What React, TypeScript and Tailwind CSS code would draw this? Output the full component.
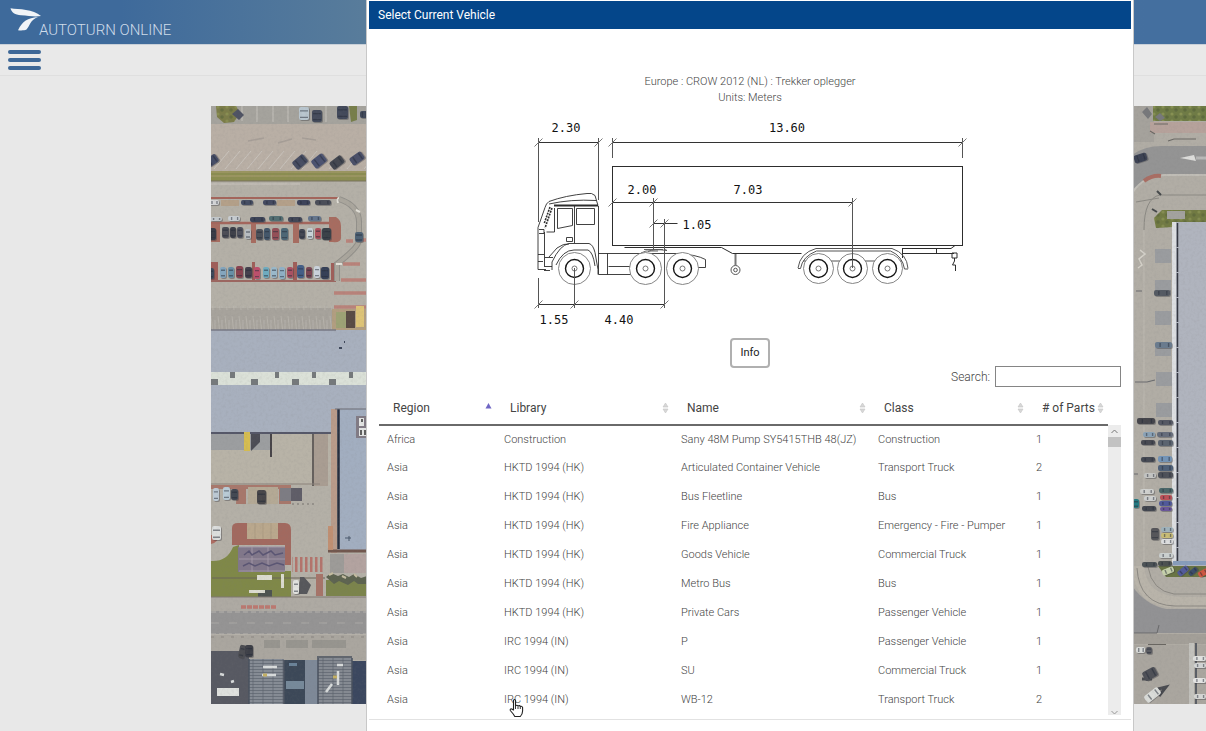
import React, { useState } from "react";

type Vehicle = {
  region: string;
  library: string;
  name: string;
  vehicleClass: string;
  parts: number;
};

const vehicles: Vehicle[] = [
  { region: "Africa", library: "Construction", name: "Sany 48M Pump SY5415THB 48(JZ)", vehicleClass: "Construction", parts: 1 },
  { region: "Asia", library: "HKTD 1994 (HK)", name: "Articulated Container Vehicle", vehicleClass: "Transport Truck", parts: 2 },
  { region: "Asia", library: "HKTD 1994 (HK)", name: "Bus Fleetline", vehicleClass: "Bus", parts: 1 },
  { region: "Asia", library: "HKTD 1994 (HK)", name: "Fire Appliance", vehicleClass: "Emergency - Fire - Pumper", parts: 1 },
  { region: "Asia", library: "HKTD 1994 (HK)", name: "Goods Vehicle", vehicleClass: "Commercial Truck", parts: 1 },
  { region: "Asia", library: "HKTD 1994 (HK)", name: "Metro Bus", vehicleClass: "Bus", parts: 1 },
  { region: "Asia", library: "HKTD 1994 (HK)", name: "Private Cars", vehicleClass: "Passenger Vehicle", parts: 1 },
  { region: "Asia", library: "IRC 1994 (IN)", name: "P", vehicleClass: "Passenger Vehicle", parts: 1 },
  { region: "Asia", library: "IRC 1994 (IN)", name: "SU", vehicleClass: "Commercial Truck", parts: 1 },
  { region: "Asia", library: "IRC 1994 (IN)", name: "WB-12", vehicleClass: "Transport Truck", parts: 2 },
];

const columns: { label: string; width: string; sort: "asc" | "none" }[] = [
  { label: "Region", width: "w-[117px]", sort: "asc" },
  { label: "Library", width: "w-[177px]", sort: "none" },
  { label: "Name", width: "w-[197px]", sort: "none" },
  { label: "Class", width: "w-[158px]", sort: "none" },
  { label: "# of Parts", width: "w-[80px]", sort: "none" },
];

function SortIcon({ sort }: { sort: "asc" | "none" }) {
  if (sort === "asc") {
    return (
      <svg width="7" height="12" viewBox="0 0 7 12" aria-hidden="true">
        <path d="M3.5 1 6.500 6.500H.5Z" fill="#6f66c4" />
      </svg>
    );
  }
  return (
    <svg width="7" height="12" viewBox="0 0 7 12" aria-hidden="true">
      <path d="M3.5 1 6 5H1ZM3.5 11 1 7H6Z" fill="#d8d8d8" stroke="#c4c4c4" strokeWidth=".6" />
    </svg>
  );
}

/* A parked car seen from above: x, y, width, height, colour, rotation. */
type Car = [number, number, number, number, string, number?];

function Cars({ cars }: { cars: Car[] }) {
  return (
    <>
      {cars.map(([x, y, w, h, fill, angle = 0], i) => {
        const upright = h > w;
        return (
          <g key={i} transform={`rotate(${angle} ${x + w / 2} ${y + h / 2})`}>
            <rect x={x + 1} y={y + 1} width={w} height={h} rx="2" fill="#3d3d42" opacity=".4" />
            <rect x={x} y={y} width={w} height={h} rx="2" fill={fill} />
            {upright ? (
              <path d={`M${x + 1} ${y + h * 0.3}h${w - 2}M${x + 1} ${y + h * 0.8}h${w - 2}`} stroke="#252b38" strokeWidth="1.4" opacity=".5" />
            ) : (
              <path d={`M${x + w * 0.3} ${y + 1}v${h - 2}M${x + w * 0.8} ${y + 1}v${h - 2}`} stroke="#252b38" strokeWidth="1.4" opacity=".5" />
            )}
          </g>
        );
      })}
    </>
  );
}

const westCars: Car[] = [
  [299, 107, 10, 13, "#b9c6cf"],
  [312, 110, 10, 12, "#454c5c"],
  [337, 106, 11, 13, "#42495a"],
  [360, 111, 8, 7, "#424a5c"],
  [293, 157, 14, 10, "#464c61", -40],
  [312, 156, 14, 10, "#4b5270", -38],
  [330, 158, 14, 9, "#43464f", -38],
  [350, 154, 14, 9, "#4a4f68", -35],
  [206, 156, 12, 9, "#454c66", -35],
  [209, 200, 10, 5, "#d5d6d8"],
  [241, 200, 12, 5, "#454d63"],
  [263, 200, 13, 5, "#434960"],
  [297, 200, 13, 5, "#3d435a"],
  [315, 200, 16, 5, "#4a4d58"],
  [210, 217, 12, 4, "#c3c8cb"],
  [228, 216, 12, 5, "#c9ced2"],
  [250, 217, 15, 5, "#3b4256"],
  [269, 216, 14, 5, "#526e72"],
  [288, 217, 14, 5, "#424757"],
  [308, 216, 13, 5, "#64758d"],
  [206, 228, 10, 12, "#393c47"],
  [222, 227, 7, 11, "#4b4c55"],
  [230, 227, 6, 11, "#3e4049"],
  [237, 227, 6, 11, "#4c4f5b"],
  [245, 229, 6, 10, "#b8bdc2"],
  [256, 229, 7, 11, "#4c5059"],
  [264, 228, 6, 12, "#43566a"],
  [272, 228, 7, 12, "#944f57"],
  [281, 228, 7, 12, "#4c6675"],
  [299, 229, 6, 10, "#414551"],
  [307, 228, 6, 11, "#c9d3d8"],
  [315, 228, 6, 11, "#ad515c"],
  [322, 228, 9, 12, "#3a4148"],
  [206, 268, 8, 11, "#3c485a"],
  [220, 267, 6, 11, "#84a6be"],
  [228, 267, 6, 11, "#6790a7"],
  [236, 266, 7, 12, "#894350"],
  [245, 267, 7, 11, "#433f4c"],
  [254, 267, 6, 12, "#bd4f6c"],
  [263, 267, 6, 11, "#6eacc0"],
  [271, 267, 6, 11, "#9ab9ca"],
  [279, 267, 6, 12, "#8fb0c6"],
  [287, 267, 6, 11, "#aa5163"],
  [297, 265, 7, 13, "#435e87"],
  [306, 267, 6, 11, "#7a4553"],
  [314, 266, 6, 12, "#cbd3dc"],
  [321, 267, 8, 12, "#353f56"],
  [355, 232, 8, 10, "#4d6174"],
  [213, 488, 6, 13, "#bdcad4"],
  [223, 487, 7, 13, "#b9cbd6"],
  [231, 489, 7, 11, "#444953"],
  [257, 490, 9, 14, "#484649"],
  [212, 526, 9, 14, "#dcdedd"],
  [239, 645, 6, 13, "#4c4d52", 12],
  [245, 645, 8, 12, "#3d3f47"],
  [293, 580, 6, 14, "#e2e3df"],
];

const eastCars: Car[] = [
  [1134, 154, 13, 8, "#3c4253", -18],
  [1154, 290, 16, 6, "#545a63"],
  [1155, 342, 17, 6, "#6a7b8e"],
  [1137, 418, 18, 6, "#45454b"],
  [1158, 420, 15, 5, "#555863"],
  [1143, 432, 12, 5, "#8aa2b6"],
  [1157, 432, 16, 5, "#666d7b"],
  [1141, 440, 14, 5, "#474951"],
  [1158, 440, 15, 6, "#5b6470"],
  [1141, 457, 14, 5, "#444852"],
  [1158, 456, 14, 6, "#7394b7"],
  [1158, 465, 15, 6, "#4e6078"],
  [1144, 473, 12, 5, "#c5c6c4"],
  [1158, 472, 15, 6, "#4d5058"],
  [1140, 489, 14, 5, "#d0d1cf"],
  [1159, 488, 14, 5, "#4a6668"],
  [1144, 496, 12, 5, "#ced0d0"],
  [1160, 495, 12, 5, "#bd5057"],
  [1133, 499, 6, 9, "#247a82"],
  [1159, 501, 13, 5, "#50599a"],
  [1142, 506, 14, 5, "#42464f"],
  [1160, 507, 12, 4, "#6a569b"],
  [1151, 528, 8, 12, "#56565a"],
  [1161, 527, 12, 5, "#a0b3bc"],
  [1161, 533, 12, 5, "#c9bd77"],
  [1161, 539, 12, 5, "#dedfe0"],
  [1159, 553, 14, 5, "#cbd0cf"],
  [1142, 562, 15, 5, "#4b5155"],
  [1158, 561, 14, 5, "#4c5150"],
  [1162, 568, 12, 6, "#c7d2ac", -22],
  [1177, 568, 12, 6, "#525b9a", -40],
  [1188, 569, 10, 5, "#394b69", -40],
  [1198, 570, 10, 6, "#d15540", -30],
  [1136, 647, 9, 6, "#d9dbd8"],
  [1146, 647, 6, 7, "#5a5b61"],
  [1143, 669, 14, 10, "#4e5057", -28],
  [1144, 691, 17, 8, "#dadcd9", -38],
  [1193, 656, 13, 5, "#e0e1df"],
  [1194, 663, 12, 5, "#d5d7d7"],
  [1193, 678, 13, 5, "#e5e5e4"],
  [1194, 694, 12, 5, "#d7d8d6"],
];

function AerialMap() {
  return (
    <svg className="h-[598px] w-full" viewBox="211 106 995 598" preserveAspectRatio="xMinYMin slice" role="img" aria-label="Aerial photo of the site">
      <defs>
        <pattern id="tiles" width="10" height="3" patternUnits="userSpaceOnUse">
          <path d="M0 .5H10M3 0V3" stroke="#565d68" strokeWidth=".6" />
        </pattern>
        <pattern id="leaves" width="9" height="7" patternUnits="userSpaceOnUse">
          <circle cx="2" cy="2" r="1.6" fill="#97a05c" />
          <circle cx="6" cy="5" r="1.8" fill="#525f38" />
        </pattern>
        <pattern id="stalls" width="7" height="24" patternUnits="userSpaceOnUse">
          <path d="M1 4 3 22M5 8V20" stroke="#bab7b0" strokeWidth=".7" />
        </pattern>
        <pattern id="zebra" width="5" height="8" patternUnits="userSpaceOnUse">
          <rect width="2.5" height="8" fill="#b4746c" />
        </pattern>
        <filter id="grain" x="0" y="0" width="100%" height="100%">
          <feTurbulence type="fractalNoise" baseFrequency=".35" numOctaves="3" seed="4" />
          <feColorMatrix values="0 0 0 0 .2  0 0 0 0 .2  0 0 0 0 .2  1.2 0 0 0 -.5" />
        </filter>
      </defs>
      <rect x="211" y="106" width="995" height="598" fill="#b4b0a7" />

      {/* North-west car park */}
      <rect x="211" y="106" width="156" height="18" fill="#a5a39d" />
      <path d="M242 106V121M257 106V122M273 106V122M288 106V122M326 106V122" stroke="#c4c1bb" />
      <path d="M216 106h20l4 7-6 9-10 1-7-6Z" fill="#7b7c48" />
      <path d="M216 106h20l4 7-6 9-10 1-7-6Z" fill="url(#leaves)" opacity=".5" />
      <path d="m232 114 6-5 6 6-5 5Z" fill="#4e5263" />
      <path d="M349 106h8v14l-6 2Z" fill="#777e4a" />
      <rect x="211" y="124" width="156" height="48" fill="#b9afa5" />
      <path d="m214 169 15-18m-4 18 15-18m-4 18 15-18m-4 18 15-18m-4 18 15-18m-4 18 15-18m-4 18 15-18m-4 18 15-18m-4 18 15-18m12 18 5-6m13 6 5-6m12 6 5-6m12 6 5-6" stroke="#cdc8c2" strokeWidth=".8" />
      <path d="M248 141l16-3M278 143l14-4M302 138l14 2" stroke="#a69e97" strokeWidth="1.5" />
      <rect x="211" y="171" width="156" height="10" fill="#8b8d51" />
      <path d="M211 172H367M211 176H367" stroke="#a09865" strokeWidth="1.5" />
      <path d="M211 181H367" stroke="#77705c" />
      <path d="M211 184H300" stroke="#c9c4bd" />

      {/* Middle rows with paved islands */}
      <path d="M211 198H338" stroke="#a4655b" strokeWidth="2" />
      <rect x="221" y="200" width="18" height="6" fill="#b4a089" />
      <rect x="277" y="200" width="18" height="6" fill="#b4a089" />
      <path d="M211 223H330" stroke="#a4665c" strokeWidth="2.5" />
      <path d="M211 224h9v18h-9ZM251 224h5v19h-5ZM293 224h6v19h-6ZM329 217h7q5 3 5 9v12q0 5-9 4h-3Z" fill="#a76c60" />
      <path d="M211 262h7v19h-7ZM252 262h3v19h-3ZM293 262h4v19h-4ZM331 263h5v19h-5Z" fill="#9f5e59" />
      <path d="M211 281H336" stroke="#9c6660" strokeWidth="2" />
      <path d="M339 199q21 7 20 25v16q0 7-22 24v17" fill="none" stroke="#92908a" strokeWidth="6" />
      <path d="M339 199q21 7 20 25v16q0 7-22 24v17" fill="none" stroke="#aaa69d" strokeWidth="4" />
      <path d="M339 198q-2 0-1 5M356 210l4 2M336 264h6" stroke="#e1dfd7" strokeWidth="2" />
      <path d="M343 264H360M341 280H367M334 293H367M334 307H367M346 241H353M359 240H367" stroke="#b9827a" strokeWidth="3.500" />
      <rect x="211" y="308" width="122" height="22" fill="#a7a39c" />
      <rect x="211" y="306" width="122" height="24" fill="url(#stalls)" />
      <rect x="332" y="309" width="35" height="21" fill="#b29e80" />
      <rect x="336" y="312" width="10" height="16" fill="#9da275" />
      <rect x="346" y="311" width="9" height="17" fill="#594b44" />
      <rect x="356" y="306" width="8" height="21" fill="#dec477" />

      {/* Warehouse roof */}
      <rect x="211" y="330" width="156" height="103" fill="#a8b0be" />
      <path d="M211 330H336" stroke="#777984" strokeWidth="1.500" />
      <rect x="211" y="372" width="156" height="13" fill="#dbe1d8" />
      <path d="M230 372h5v6h-5ZM275 372h4v6h-4ZM312 372h4v6h-4ZM349 372h4v6h-4ZM211 379h7v6h-7ZM251 379h7v6h-7ZM292 379h7v6h-7ZM329 379h7v6h-7Z" fill="#75797b" />
      <path d="M339 348h3M344 342h1" stroke="#3d4659" strokeWidth="2" />

      {/* Yard behind the warehouse */}
      <rect x="211" y="433" width="122" height="52" fill="#b8b3a7" />
      <rect x="211" y="434" width="60" height="16" fill="#9c9ea0" />
      <path d="M211 433H333" stroke="#555768" strokeWidth="2" />
      <path d="M251 434h9v8l-9 9Z" fill="#4b4c55" />
      <rect x="244" y="432" width="6" height="19" fill="#d6bd50" />
      <path d="M271 434V457" stroke="#474448" strokeWidth="2" />
      <rect x="313" y="434" width="15" height="52" fill="#a99d92" />
      <path d="M313 434V486" stroke="#65605d" strokeWidth="2" />
      <path d="M211 484H320" stroke="#8a817b" />
      <path d="M211 485h80v4h-80Z" fill="#a9786c" />
      <path d="M237 488h9v16h-10ZM279 488h12v16h-12Z" fill="#a7776b" />
      <rect x="248" y="487" width="30" height="17" fill="#b4a995" />
      <rect x="280" y="488" width="11" height="13" fill="#7d7c83" />
      <rect x="291" y="488" width="11" height="13" fill="#5f5d67" />
      <path d="M292 504h22" stroke="#77736f" strokeDasharray="2 3" />
      <rect x="331" y="409" width="6" height="144" fill="#b99b8a" />
      <rect x="338" y="409" width="29" height="141" fill="#a2aec0" />
      <path d="M338.500 409V549" stroke="#262c3c" strokeWidth="2.500" />
      <path d="M335 409H367" stroke="#6d6c75" />
      <rect x="356" y="416" width="10" height="22" fill="#817b85" />
      <path d="M359 418h5v8h-5ZM359 428h7v8h-7Z" fill="#e3e5e4" />
      <path d="M362 419v3M361 430v5M365 430v5" stroke="#333" strokeWidth="1.500" />
      <path d="M328 551H367" stroke="#71574e" strokeWidth="3" />
      <rect x="328" y="526" width="5" height="24" fill="#c08f72" />
      <path d="M345 538h6M349 536v5" stroke="#48566b" />
      <rect x="330" y="554" width="14" height="19" fill="#9d9b98" />
      <rect x="344" y="554" width="22" height="19" fill="#b3a3a0" />

      {/* Plaza and lawn */}
      <path d="M211 561q16 1 22-14l6-2v26h52v26H211Z" fill="#7f8848" />
      <path d="M211 535h8q-1 8-8 9Z" fill="#ad6c62" />
      <path d="M232 528q0-5 6-5h47q6 0 6 7v35h-6v-20h-53Z" fill="#a2695f" />
      <rect x="247" y="523" width="31" height="16" fill="#baa88d" />
      <path d="M255 523v16M263 523v16M271 523v16" stroke="#ab9a81" />
      <rect x="238" y="547" width="47" height="25" fill="#81778a" />
      <path d="M239 547h46M239 559h46M239 571h46M252 547v25M268 547v25" stroke="#a297a6" />
      <path d="m244 555 5-4 3 4 7-4 4 4 8-4 4 4 8-2M243 566l6-3 6 3 7-3 7 3 8-3 7 2" stroke="#5a5573" strokeWidth="1.500" fill="none" />
      <rect x="292" y="557" width="31" height="15" fill="url(#zebra)" />
      <path d="M212 578H325" stroke="#6a6559" />
      <path d="M257 575h15v5h-15ZM281 574h3v14h-3ZM249 590h16v3h-16Z" fill="#dcdcd0" />
      <path d="M265 590h7v7h-14v-4h7Z" fill="#4d5350" />
      <path d="M300 577h4l7 8-4 9h-8Z" fill="#56575b" />
      <rect x="316" y="574" width="7" height="22" fill="#a67469" />
      <rect x="326" y="580" width="41" height="16" fill="#7b844b" />
      <path d="m326 577 5-4 7 3 5-2 6 3 5-3 7 4 6-2v8h-9l-4-3-6 4-9-4-5 3Z" fill="#5d6350" />
      <path d="m329 575 4-2M342 576l4 2M354 574l3 3" stroke="#c5bda2" strokeWidth="2" />

      {/* Southern road */}
      <rect x="211" y="597" width="156" height="15" fill="#aeaaa3" />
      <path d="M211 597H367" stroke="#807972" />
      <path d="M241 607H277" stroke="#bb7870" strokeWidth="3.500" strokeDasharray="5 1" />
      <rect x="211" y="611" width="156" height="23" fill="#959494" />
      <path d="M211 612H367M211 634H367" stroke="#b5b2ad" strokeDasharray="5 3" />
      <path d="M211 623H367" stroke="#aaa8a5" strokeDasharray="8 10" />
      <rect x="211" y="635" width="156" height="25" fill="#aaa69f" />
      <path d="M264 640h16v8h-16ZM286 640h22v8h-22ZM312 640h34v8h-34Z" fill="#8b8a86" opacity=".6" />
      <path d="M211 637H367" stroke="#8a8580" strokeDasharray="3 7" />
      <rect x="211" y="651" width="38" height="53" fill="#575962" />
      <rect x="249" y="659" width="35" height="45" fill="#868c95" />
      <rect x="249" y="659" width="35" height="45" fill="url(#tiles)" />
      <rect x="284" y="660" width="22" height="44" fill="#3c4858" />
      <rect x="305" y="660" width="13" height="44" fill="#7e8998" />
      <rect x="318" y="658" width="34" height="46" fill="#858a92" />
      <rect x="318" y="658" width="34" height="46" fill="url(#tiles)" />
      <rect x="352" y="661" width="15" height="43" fill="#3b475f" />
      <rect x="217" y="688" width="22" height="8" fill="#dfe1de" />
      <path d="M286 681h18v8h-18Z" fill="#76899a" />
      <path d="M289 663h8v3h-8Z" fill="#6a8298" />
      <path d="M263 667h14M262 675h14M338 671v14M326 692l6-8M220 674l4 1M231 682l3-1M337 665h6" stroke="#d9dcdc" strokeWidth="2.500" />
      <path d="M263 675h4M333 677h4" stroke="#c4b064" strokeWidth="3" />
      <path d="M249 659V704M284 660V704M318 658V704M352 658V704M317 657H352" stroke="#4a525f" strokeWidth="1.500" />

      {/* East side: road, kerbs and retail roof */}
      <rect x="1132" y="106" width="74" height="598" fill="#b1ada5" />
      <rect x="1132" y="106" width="22" height="36" fill="#a5a29c" />
      <rect x="1153" y="106" width="53" height="15" fill="#6f7b45" />
      <rect x="1153" y="106" width="53" height="15" fill="url(#leaves)" opacity=".6" />
      <path d="m1142 112 5-5 5 7-4 5ZM1155 117l5-4 5 5-5 3Z" fill="#77787b" />
      <rect x="1150" y="122" width="56" height="11" fill="#b6a29b" />
      <path d="M1154 124h14M1150 131l5 3M1168 141l6-2h22" stroke="#6b6965" strokeWidth="1.200" fill="none" />
      <path d="M1132 155q12-9 30-9h44v29h-40q-22 2-34 18Z" fill="#949494" />
      <path d="m1180 158 14-3 2 6Z" fill="#dcdcda" />
      <path d="M1196 158h10" stroke="#b9b9b8" strokeWidth="3" />
      <path d="M1132 193q12-18 34-18h40" fill="none" stroke="#c0bdb6" strokeWidth="2" />
      <path d="M1144 181q8-6 17-5" stroke="#a96d63" strokeWidth="4" fill="none" />
      <path d="M1144 230q0-32 16-35h46M1136 202l23-4" fill="none" stroke="#8b8983" />
      <path d="M1157 191l4 4M1152 209l5 3" stroke="#45484a" strokeWidth="2" />
      <path d="M1154 218l8-8h44v12h-29l-4 5-17 1Z" fill="#717a42" />
      <path d="M1154 218l8-8h44v12h-29l-4 5-17 1Z" fill="url(#leaves)" opacity=".5" />
      <rect x="1167" y="211" width="18" height="8" fill="#a3a29e" />
      <path d="M1144 230V567" stroke="#bcb8b0" />
      <path d="M1155 249h16v14h-16ZM1155 280h16v15h-16ZM1155 311h16v14h-16ZM1155 343h16v13h-16ZM1156 372h16v14h-16ZM1156 403h16v14h-16Z" fill="#9a9c9f" />
      <path d="M1140 250l5 4-6 5 3 6-4 3" stroke="#d5d2ca" strokeWidth="1.500" fill="none" />
      <path d="M1136 291h6M1156 291h15M1135 382h12l8-2M1134 474h4" stroke="#6a6b6e" strokeWidth="1.200" fill="none" />
      <rect x="1172" y="222" width="34" height="344" fill="#b0b4be" />
      <rect x="1172" y="222" width="4" height="343" fill="#dddfe2" />
      <path d="M1177.500 223V562" stroke="#333640" strokeWidth="1.500" strokeDasharray="24 1" />
      <path d="M1173 563H1206" stroke="#879dbb" strokeWidth="4" />
      <path d="M1158 566h48v11h-40Z" fill="#687443" />
      <path d="M1132 566h12q2 31 40 31h22v11h-30q-42 0-44-42Z" fill="#b9b4aa" />
      <path d="M1132 586q14 19 34 23h40v24h-74Z" fill="#929294" />
      <path d="M1137 568q2 37 38 38h31M1148 567q4 24 26 27h32" fill="none" stroke="#8b8882" />
      <path d="M1132 633h25l2-8" fill="none" stroke="#69696b" />
      <rect x="1132" y="634" width="74" height="10" fill="#a39f98" />
      <path d="M1148 645h18" stroke="#524f4b" strokeWidth="1.500" />
      <rect x="1132" y="645" width="74" height="59" fill="#aaa69f" />
      <path d="M1142 679h10M1158 689l8-2-7 9" stroke="#494b50" strokeWidth="3" fill="none" />
      <rect x="1189" y="643" width="5" height="61" fill="#c3c2bd" />
      <path d="M1196 643V704" stroke="#5a5e65" strokeWidth="2" />

      <Cars cars={westCars} />
      <Cars cars={eastCars} />
      <rect x="211" y="106" width="995" height="598" filter="url(#grain)" opacity=".2" />
    </svg>
  );
}

function Wheel({ x, r = 16 }: { x: number; r?: number }) {
  return (
    <g fill="none">
      <circle cx={x} cy="268.500" r={r} fill="#fff" stroke="#777" strokeWidth=".9" />
      <circle cx={x} cy="268.500" r="9" stroke="#161616" strokeWidth="1.400" />
      <circle cx={x} cy="268.500" r="2.500" stroke="#555" strokeWidth=".8" />
    </g>
  );
}

function TruckDrawing() {
  const ticks: [number, number][] = [
    [538.5, 142.5], [598.5, 142.5], [612.5, 142.5], [962.5, 142.5],
    [612.5, 202.5], [653.5, 202.5], [852.5, 202.5],
    [653.5, 223.5], [664.5, 223.5],
    [538.5, 304.5], [574.5, 304.5], [664.5, 304.5],
  ];
  return (
    <svg className="mx-auto w-[436px] max-w-full" viewBox="532 116 436 214" role="img" aria-label="Side view of a tractor with semi-trailer and its dimensions in meters">
      {/* Trailer */}
      <g fill="none" stroke="#2d2d2d">
        <rect x="612.500" y="166.500" width="350" height="79" />
        <path d="M624.500 247.500h97l11 6h69M902 253.500h52M903 248.500h48l4-3M902.500 248v10M936.500 248.500v5M952 253h5v5h-5ZM954.500 258v3l-2 4h3v6" />
        <path d="M735.500 254v11" strokeWidth="2" stroke="#777" />
        <circle cx="735.500" cy="270" r="4.500" stroke="#555" />
        <circle cx="735.500" cy="270" r="1.800" stroke="#555" />
        <path d="M798 268q2-15 18-19.500h76q15 5 16 20M800.500 268.500q2-12 16-17.500h74q12 5 14 18M798 268.500h2.500M904.500 269h3.500M803 261h99" stroke="#555" />
      </g>
      {/* Chassis and cab */}
      <g fill="none" stroke="#2d2d2d" strokeWidth=".9">
        <path d="M598.500 253.500h78q20 1 29 6v8h-8M598.500 274.500h34M608.500 266.500h22M607.500 253.500v21" />
        <path d="M644 249.500h19M648 251.500q6-3 19-1l-3-1.500M641 253l5-2h12" stroke="#555" />
        <path d="M598.500 206v68.500M598 205.500l-3-10q-3-3-8-2-22 2-38 8-3 2-4 6l-7 20v42h8M555 205.500h43M549 204q22-5 47-3.500" />
        <path d="M554 205.500h44" strokeWidth="2" />
        <path d="M552 208l-7 20M550 207l-6 17" strokeWidth="1.600" strokeDasharray="2 1" />
        <path d="M554.500 208v24h-8M557.500 208.500h15v17l-15 3ZM576.500 208.500h18v16h-18ZM574.500 206v37M566.500 237.500h6v4h-6ZM539 229.500h5v4h-5M544.500 232v34M538 254.500h6M538 261.500h5M545 257.500h8M544 266.500h8M544 270.500h6" />
        <path d="M552 270v-8q8-17 17-18.500h20q4 1 6 9l3 17v5M549 257l8-9q7-5 12-4" />
        <path d="M556 265q7-15 18-15h14q5 2 7 16" />
      </g>
      <Wheel x={574.5} />
      <Wheel x={645.5} />
      <Wheel x={682.5} />
      <Wheel x={818.5} r={15} />
      <Wheel x={852.5} r={15} />
      <Wheel x={887.5} r={15} />
      {/* Dimension lines */}
      <g stroke="#333" fill="none">
        <path d="M538.500 142.500h60M612.500 142.500h350M612.500 202.500h240M653.500 223.500h24M538.500 304.500h126" />
        <path d="M538.500 138v84M598.500 138v62M612.500 138v20M962.500 138v20M653.500 198v52M852.500 198v70M664.500 219v89M538.500 278v30M574.500 268v40" stroke="#555" />
        <path d={ticks.map(([x, y]) => `M${x - 4} ${y + 4}l8 -8`).join("")} stroke="#777" />
      </g>
      <g className="font-['DejaVu_Sans_Mono',monospace] text-[12px]" fill="#111" textAnchor="middle">
        <text x="566" y="132">2.30</text>
        <text x="787" y="132">13.60</text>
        <text x="642" y="194">2.00</text>
        <text x="748" y="194">7.03</text>
        <text x="697" y="229">1.05</text>
        <text x="554" y="324">1.55</text>
        <text x="619" y="324">4.40</text>
      </g>
    </svg>
  );
}

function PageBackground() {
  return (
    <div className="flex flex-col">
      <header className="flex h-[45px] border-b border-[#c9d0d8] bg-linear-to-r from-[#3e6a9b] from-10% via-[#587c9b] via-30% to-[#446f9f] to-95%">
        <a href="#home" className="flex items-start pt-2 pl-[10px] text-[#cfdcea]">
          <svg width="32" height="24" viewBox="0 0 32 24" aria-hidden="true">
            <path d="M.5 .3C9 1.500 23 1 31 8 25 9.200 19 7.800 11 7.300 5 7 1.500 4.500 .5 .3ZM28 9C17.500 10 12.500 13 8 22.200c3.500.4 6.500.2 8.500-.7C20 18 20 12 28 9Z" fill="#f1f4f7" />
          </svg>
          <span className="-ml-[3px] pt-[14px] text-[15px] leading-4 font-light">AUTOTURN ONLINE</span>
        </a>
      </header>
      <nav className="flex h-[31px] items-start border-b border-[#dfdfdf] bg-[#e9e9e9] pt-[5px] pl-2">
        <button type="button" aria-label="Menu" className="flex w-[33px] flex-col gap-1">
          <span className="h-1 w-full rounded-full bg-[#3d6797]" />
          <span className="h-1 w-full rounded-full bg-[#3d6797]" />
          <span className="h-1 w-full rounded-full bg-[#3d6797]" />
        </button>
      </nav>
      <main className="flex pt-[30px] pb-[27px] pl-[211px]">
        <AerialMap />
      </main>
    </div>
  );
}

function HandCursor() {
  return (
    <svg className="pointer-events-none absolute top-3 left-[13px]" width="15" height="20" viewBox="0 0 15 20" aria-hidden="true">
      <path d="M4.500 12V2.200Q5.500.8 6.500 2.200V8Q7.800 6.500 9 8q1.400-1 2.300.4 1.700-.6 2.300 1V13q0 3-2.300 5.500H5.800Q4.500 16 1.300 12.500.8 10.500 2.800 11Z" fill="#fff" stroke="#222" strokeWidth="1.100" strokeLinejoin="round" />
      <path d="M6.500 8v3M9 8.500V11M11.300 9v2" stroke="#222" fill="none" strokeWidth=".9" />
    </svg>
  );
}

function VehicleTable() {
  return (
    <div className="flex pt-1 pr-[10px] pl-[10px]">
      <table className="w-full flex-1 table-fixed border-collapse text-left text-[11px] leading-4 font-light">
        <thead>
          <tr className="h-[34px] border-b-2 border-[#6a6a6a] text-[12px] text-[#444]">
            {columns.map((column) => (
              <th key={column.label} scope="col" aria-sort={column.sort === "asc" ? "ascending" : undefined} className={`${column.width} p-0 pr-1 pl-[14px] font-normal`}>
                <button type="button" className="flex w-full items-center justify-between whitespace-nowrap">
                  {column.label}
                  <SortIcon sort={column.sort} />
                </button>
              </th>
            ))}
          </tr>
        </thead>
        <tbody className="text-[#444]">
          {vehicles.map((vehicle) => (
            <tr key={vehicle.name} className="h-[29px] whitespace-nowrap">
              <td className="p-0 pb-px pl-2">{vehicle.region}</td>
              <td className="relative p-0 pb-px pl-2">
                {vehicle.library}
                {vehicle.name === "WB-12" && <HandCursor />}
              </td>
              <td className="p-0 pb-px pl-2">{vehicle.name}</td>
              <td className="p-0 pb-px pl-2">{vehicle.vehicleClass}</td>
              <td className="p-0 pb-px pl-2">{vehicle.parts}</td>
            </tr>
          ))}
        </tbody>
      </table>
      <div className="mt-[34px] flex w-[13px] shrink-0 flex-col items-center bg-[#ececec]" aria-hidden="true">
        <svg className="h-3 w-[9px]" viewBox="0 0 9 12">
          <path d="M1.500 8 4.500 5l3 3" fill="none" stroke="#777" />
        </svg>
        <span className="h-[10px] w-[13px] bg-[#c2c2c2]" />
        <svg className="mt-auto h-2 w-[9px]" viewBox="0 0 9 8">
          <path d="M1.500 4 4.500 7l3-3" fill="none" stroke="#999" />
        </svg>
      </div>
    </div>
  );
}

function VehicleDialog() {
  const [query, setQuery] = useState("");
  return (
    <section role="dialog" aria-labelledby="dialog-title" className="flex flex-1 flex-col border-x border-[#c8c8c8] bg-white px-[2px] pt-px">
      <h1 id="dialog-title" className="flex h-7 items-center bg-[#04468a] pl-[9px] text-[12px] leading-4 font-normal text-white">
        Select Current Vehicle
      </h1>
      <p className="mt-[45px] mb-[10px] text-center text-[11px] leading-4 font-light text-[#444]">
        Europe : CROW 2012 (NL) : Trekker oplegger
        <br />
        Units: Meters
      </p>
      <TruckDrawing />
      <button type="button" className="mt-2 h-[30px] w-10 self-center rounded-[4px] border-2 border-[#b0b0b0] bg-white text-[11px] text-[#222]">
        Info
      </button>
      <div className="-mt-0.5 flex items-center justify-end pr-[10px]">
        <label htmlFor="vehicle-search" className="pr-[5px] text-[12px] font-light text-[#444]">
          Search:
        </label>
        <input id="vehicle-search" type="search" value={query} onChange={(event) => setQuery(event.target.value)} className="h-[21px] w-[126px] border border-[#858585] bg-white px-1 text-[12px]" />
      </div>
      <VehicleTable />
      <div className="mt-1 flex-1 border-t border-[#e2e2e2]" />
    </section>
  );
}

export default function App() {
  return (
    <div className="relative min-h-screen overflow-hidden bg-[#e8e8e8] font-[Roboto,'Liberation_Sans',sans-serif]">
      <PageBackground />
      <div className="absolute inset-0 flex pr-[72px] pl-[366px]">
        <VehicleDialog />
      </div>
    </div>
  );
}
